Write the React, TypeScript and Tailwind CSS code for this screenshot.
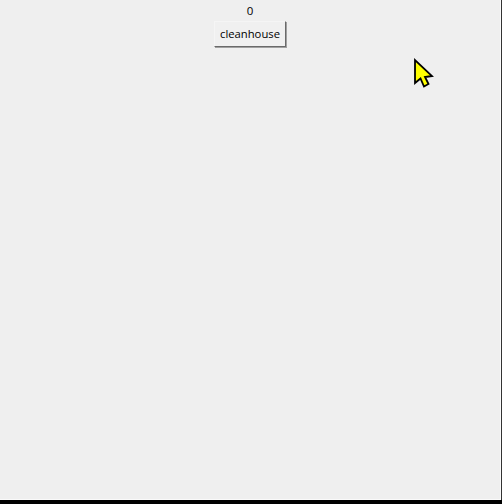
import React from 'react';

function Cursor() {
  return (
    <svg className="absolute left-[413px] top-[57px]" width="22" height="32" viewBox="0 0 22 32">
      <path
        d="M2 3 L2 26 L7.5 21.5 L11 29.5 L15.5 27 L12 20 L19 19 Z"
        fill="#ffff00"
        stroke="#000000"
        strokeWidth="1.8"
        strokeLinejoin="miter"
      />
    </svg>
  );
}

export default function App() {
  return (
    <div className="relative flex h-[504px] w-[502px] flex-col overflow-hidden bg-[#efefef] font-['Open_Sans',sans-serif] text-black">
      <div className="flex flex-1 border-r border-r-[#333333]">
        <div className="flex flex-1 flex-col items-center border-r border-b border-[#fafafa] pt-[3px]">
          <div className="h-[18px] text-[11.5px] leading-[16px]">0</div>
          <button className="h-[26px] w-[72px] border border-t-[#f5f5f5] border-l-[#f5f5f5] border-r-[#6a6a6a] border-b-[#6a6a6a] bg-[#f0f0f0] text-[11.25px] leading-none shadow-[1px_1px_0_#a0a0a0]">
            cleanhouse
          </button>
        </div>
      </div>
      <div className="h-1 bg-black" />
      <Cursor />
    </div>
  );
}
